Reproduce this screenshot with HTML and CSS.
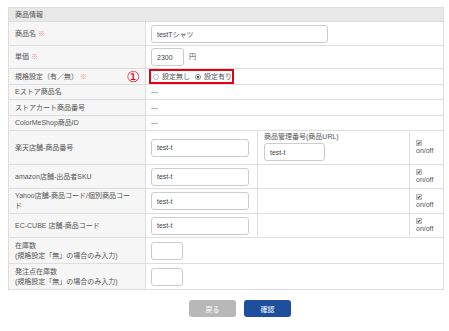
FILE: index.html
```html
<!DOCTYPE html>
<html lang="ja">
<head>
    <meta charset="UTF-8">
    <title>商品情報</title>
    <link rel="stylesheet" href="styles.css">
</head>
<body>
    <div class="page">
        <table class="item-table">
            <colgroup>
                <col class="c-label">
                <col class="c-code">
                <col class="c-extra">
                <col class="c-check">
            </colgroup>
            <tr class="head-row">
                <th colspan="4">商品情報</th>
            </tr>
            <tr class="h24">
                <td class="label">商品名 <span class="req">※</span></td>
                <td colspan="3"><input class="field w-name" type="text" value="testTシャツ"></td>
            </tr>
            <tr class="h23">
                <td class="label">単価 <span class="req">※</span></td>
                <td colspan="3"><input class="field w-price" type="text" value="2300"><span class="unit">円</span></td>
            </tr>
            <tr class="h16">
                <td class="label">
                    <div class="label-flex">
                        <span>規格設定（有／無） <span class="req">※</span></span>
                        <span class="step">①</span>
                    </div>
                </td>
                <td colspan="3" class="radio-cell">
                    <span class="radio-box">
                        <span class="radio"></span>設定無し
                        <span class="radio checked"></span>設定有り
                    </span>
                </td>
            </tr>
            <tr class="h15">
                <td class="label">Eストア商品名</td>
                <td colspan="3">---</td>
            </tr>
            <tr class="h16">
                <td class="label">ストアカート商品番号</td>
                <td colspan="3">---</td>
            </tr>
            <tr class="h15">
                <td class="label">ColorMeShop商品ID</td>
                <td colspan="3">---</td>
            </tr>
            <tr class="h34">
                <td class="label">楽天店舗-商品番号</td>
                <td><input class="field w-code" type="text" value="test-t"></td>
                <td class="col-extra">
                    <div class="extra-label">商品管理番号(商品URL)</div>
                    <input class="field w-url" type="text" value="test-t">
                </td>
                <td class="col-check"><div class="toggle"><span class="check">✔</span><span>on/off</span></div></td>
            </tr>
            <tr class="h24">
                <td class="label">amazon店舗-出品者SKU</td>
                <td><input class="field w-code" type="text" value="test-t"></td>
                <td class="col-extra"></td>
                <td class="col-check"><div class="toggle"><span class="check">✔</span><span>on/off</span></div></td>
            </tr>
            <tr class="h25">
                <td class="label">Yahoo店舗-商品コード/個別商品コー<br>ド</td>
                <td><input class="field w-code" type="text" value="test-t"></td>
                <td class="col-extra"></td>
                <td class="col-check"><div class="toggle"><span class="check">✔</span><span>on/off</span></div></td>
            </tr>
            <tr class="h24">
                <td class="label">EC-CUBE 店舗-商品コード</td>
                <td><input class="field w-code" type="text" value="test-t"></td>
                <td class="col-extra"></td>
                <td class="col-check"><div class="toggle"><span class="check">✔</span><span>on/off</span></div></td>
            </tr>
            <tr class="h26">
                <td class="label">在庫数<br>(規格設定「無」の場合のみ入力)</td>
                <td colspan="3"><input class="field w-stock" type="text"></td>
            </tr>
            <tr class="h26">
                <td class="label">発注点在庫数<br>(規格設定「無」の場合のみ入力)</td>
                <td colspan="3"><input class="field w-stock" type="text"></td>
            </tr>
        </table>
        <div class="actions">
            <button class="btn btn-back">戻る</button>
            <button class="btn btn-ok">確認</button>
        </div>
    </div>
</body>
</html>
```

FILE: styles.css
```css
body {
    margin: 0;
    background: #fff;
    font-family: "Liberation Sans", "Noto Sans CJK JP", sans-serif;
    font-size: 7px;
    color: #555;
}
.page {
    padding: 7px 6px 0 8px;
}
.item-table {
    width: 435px;
    border-collapse: collapse;
    table-layout: fixed;
    border: 1px solid #ddd;
}
.c-label { width: 137px; }
.c-code { width: 112px; }
.c-extra { width: 152px; }
.c-check { width: 34px; }
.item-table th,
.item-table td {
    border-bottom: 1px solid #ddd;
    padding: 0 5px;
    line-height: 10px;
    vertical-align: middle;
    text-align: left;
    white-space: nowrap;
}
.head-row th {
    height: 13px;
    padding: 0 6px;
    background: #e8e8e8;
    font-weight: normal;
}
.item-table td.label {
    padding: 0 6px;
    background: #f6f6f6;
    border-right: 1px solid #ddd;
}
.h15 td { height: 14px; }
.h16 td { height: 15px; }
.h23 td { height: 22px; }
.h24 td { height: 23px; }
.h25 td { height: 24px; }
.h26 td { height: 25px; }
.h34 td { height: 33px; }
.req {
    color: #f08c8c;
}
.label-flex {
    display: flex;
    justify-content: space-between;
    align-items: center;
}
.step {
    color: #e60012;
    font-family: "DejaVu Sans", sans-serif;
    font-size: 15px;
    line-height: 14px;
    margin-right: -1px;
}
.field {
    box-sizing: border-box;
    height: 18px;
    padding: 0 5px;
    border: 1px solid #ccc;
    border-radius: 3px;
    font-family: "Liberation Sans", "Noto Sans CJK JP", sans-serif;
    font-size: 7px;
    color: #444;
    vertical-align: middle;
}
.w-name { width: 177px; }
.w-price { width: 33px; }
.w-code { width: 98px; }
.w-url {
    display: block;
    width: 61px;
    margin-top: 2px;
}
.w-stock { width: 32px; }
.unit {
    margin-left: 5px;
    vertical-align: middle;
}
.item-table td.radio-cell {
    padding-left: 3px;
}
.radio-box {
    display: inline-flex;
    align-items: center;
    box-sizing: border-box;
    width: 85px;
    height: 15px;
    padding-left: 2px;
    border: 2px solid #e60012;
}
.radio {
    display: inline-block;
    box-sizing: border-box;
    width: 6px;
    height: 6px;
    margin-right: 3px;
    border: 1px solid #bbb;
    border-radius: 50%;
    background: #fff;
}
.radio.checked {
    margin-left: 5px;
    border-color: #888;
    background: radial-gradient(circle, #555 0 1.3px, #fff 1.6px);
}
.item-table td.col-extra {
    border-left: 1px solid #ddd;
    border-right: 1px solid #ddd;
    vertical-align: top;
    padding: 0 6px;
}
.extra-label {
    height: 9px;
    padding-top: 1px;
    line-height: 9px;
}
.item-table td.col-check {
    padding: 0 0 0 6px;
}
.toggle {
    display: flex;
    flex-direction: column;
    align-items: flex-start;
    gap: 1px;
    line-height: 8px;
}
.check {
    display: block;
    box-sizing: border-box;
    width: 6px;
    height: 6px;
    background: #ddd;
    border: 1px solid #bbb;
    font-size: 5px;
    line-height: 4px;
    color: #333;
    text-align: center;
}
.actions {
    display: flex;
    gap: 8px;
    padding: 10px 0 0 181px;
}
.btn {
    width: 47px;
    height: 17px;
    border: none;
    border-radius: 3px;
    color: #fff;
    font-family: "Liberation Sans", "Noto Sans CJK JP", sans-serif;
    font-size: 7px;
}
.btn-back {
    background: #b8b8b8;
}
.btn-ok {
    background: #1e4f9c;
}
```
